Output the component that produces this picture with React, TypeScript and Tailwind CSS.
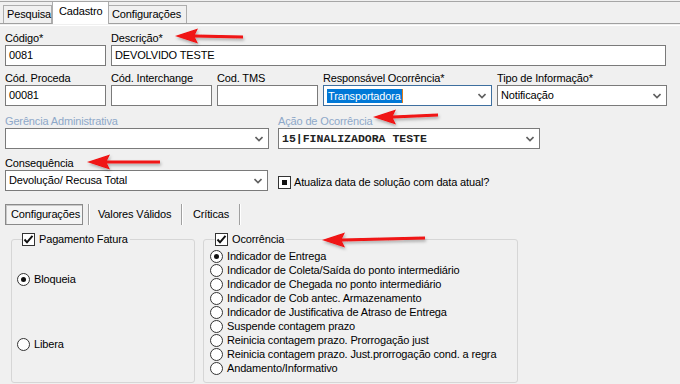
import React from "react";

const Chevron = () => (
  <svg width="8" height="6" viewBox="0 0 8 6" className="shrink-0">
    <path d="M0.5 1 L4 4.5 L7.5 1" stroke="#5f5f5f" strokeWidth="1.6" fill="none" />
  </svg>
);

const Label = ({ children, disabled }: { children: React.ReactNode; disabled?: boolean }) => (
  <div className={`h-[13px] leading-[13px] whitespace-nowrap ${disabled ? "text-[#8ea8c9]" : "text-black"}`}>{children}</div>
);

const Input = ({ value }: { value?: string }) => (
  <div className="h-[21px] border border-[#7a7a7a] bg-white px-[3px] flex items-center leading-[13px] whitespace-nowrap">{value}</div>
);

const Combo = ({ children, focused }: { children?: React.ReactNode; focused?: boolean }) => (
  <div
    className={`h-[21px] border ${focused ? "border-[#3e6f9f]" : "border-[#7a7a7a]"} bg-white pl-[3px] pr-[5px] flex items-center justify-between leading-[13px] whitespace-nowrap`}
  >
    <div className="flex items-center">{children}</div>
    <Chevron />
  </div>
);

const CheckBox = ({ mode }: { mode: "check" | "square" }) => (
  <div className="w-[13px] h-[13px] border border-[#333] bg-white flex items-center justify-center shrink-0">
    {mode === "check" ? (
      <svg width="11" height="11" viewBox="0 0 11 11">
        <path d="M1.5 5.5 L4 8.3 L9.5 1.8" stroke="#111" strokeWidth="2" fill="none" />
      </svg>
    ) : (
      <div className="w-[5px] h-[5px] bg-[#111]" />
    )}
  </div>
);

const Radio = ({ checked, label }: { checked?: boolean; label: string }) => (
  <div className="h-[14px] flex items-center gap-[4px] whitespace-nowrap">
    <div className="w-[13px] h-[13px] rounded-full border border-[#333] bg-white flex items-center justify-center shrink-0">
      {checked && <div className="w-[5px] h-[5px] rounded-full bg-[#111]" />}
    </div>
    <span className="leading-[13px]">{label}</span>
  </div>
);

const Arrow = ({ tx, ty, tail, tailY }: { tx: number; ty: number; tail: number; tailY: number }) => {
  const hb = tx + 23;
  const pts = [
    [tx, ty],
    [hb, ty - 7.5],
    [hb - 3, ty - 1.6],
    [tail, tailY - 1.4],
    [tail, tailY + 1.4],
    [hb - 3, ty + 1.6],
    [hb, ty + 7.5],
  ]
    .map((p) => p.join(","))
    .join(" ");
  return <polygon points={pts} fill="#f01212" filter="url(#sh)" />;
};

export default function App() {
  return (
    <div className="w-[680px] h-[384px] bg-[#f0f0f0] relative overflow-hidden font-['Liberation_Sans',Arial,sans-serif] text-[11px] text-black tracking-[-0.15px]">
      {/* top tab strip */}
      <div className="pt-[1px]">
        <div className="border-t border-[#a6a6a6]">
          <div className="flex items-end pl-[3px] h-[22px] border-b border-[#a0a0a0]">
            <div className="w-[49px] h-[18px] border border-b-0 border-[#adadad] bg-[#f0f0f0] flex items-center pl-[3px]">Pesquisa</div>
            <div className="w-[57px] h-[22px] -mb-[1px] border-x border-[#adadad] bg-white flex items-center pl-[6px] pb-[3px] relative z-10">Cadastro</div>
            <div className="w-[78px] h-[18px] border border-b-0 border-l-0 border-[#adadad] bg-[#f0f0f0] flex items-center pl-[3px]">Configurações</div>
          </div>
        </div>
      </div>
      <div className="h-[1px] bg-white mt-[1px]" />

      {/* form */}
      <div className="px-[5px] pt-[6px]">
        {/* row 1 */}
        <div className="flex gap-[5px]">
          <div className="w-[101px]">
            <Label>Código*</Label>
            <Input value="0081" />
          </div>
          <div className="w-[555px]">
            <Label>Descrição*</Label>
            <Input value="DEVOLVIDO TESTE" />
          </div>
        </div>
        {/* row 2 */}
        <div className="flex gap-[5px] mt-[6px]">
          <div className="w-[101px]">
            <Label>Cód. Proceda</Label>
            <Input value="00081" />
          </div>
          <div className="w-[101px]">
            <Label>Cód. Interchange</Label>
            <Input />
          </div>
          <div className="w-[101px]">
            <Label>Cod. TMS</Label>
            <Input />
          </div>
          <div className="w-[169px]">
            <Label>Responsável Ocorrência*</Label>
            <Combo focused>
              <span className="bg-[#0078d7] text-white px-[1px] leading-[14px]">Transportadora</span>
              <span className="w-[1px] h-[14px] bg-[#e07b1a]" />
            </Combo>
          </div>
          <div className="w-[170px]">
            <Label>Tipo de Informação*</Label>
            <Combo>Notificação</Combo>
          </div>
        </div>
        {/* row 3 */}
        <div className="flex gap-[9px] mt-[9px]">
          <div className="w-[264px]">
            <Label disabled>Gerência Administrativa</Label>
            <Combo />
          </div>
          <div className="w-[262px]">
            <Label disabled>Ação de Ocorrência</Label>
            <Combo>
              <span className="font-['Liberation_Mono',monospace] font-bold text-[11.5px] tracking-[0px] text-[#222]">15|FINALIZADORA TESTE</span>
            </Combo>
          </div>
        </div>
        {/* row 4 */}
        <div className="mt-[8px]">
          <Label>Consequência</Label>
          <div className="flex items-center">
            <div className="w-[263px]">
              <Combo>Devolução/ Recusa Total</Combo>
            </div>
            <div className="ml-[10px] flex items-center gap-[3px] mt-[4px]">
              <CheckBox mode="square" />
              <span className="whitespace-nowrap">Atualiza data de solução com data atual?</span>
            </div>
          </div>
        </div>

        {/* sub tabs */}
        <div className="flex items-stretch h-[21px] mt-[13px]">
          <div className="w-[78px] border border-[#8a8a8a] bg-[#f4f4f4] shadow-[inset_1px_1px_0_#c8c8c8] flex items-center pl-[5px]">Configurações</div>
          <div className="ml-[5px] w-[2px] border-l border-[#a0a0a0] bg-white" />
          <div className="w-[91px] flex items-center pl-[8px]">Valores Válidos</div>
          <div className="w-[2px] border-l border-[#a0a0a0] bg-white" />
          <div className="w-[56px] flex items-center pl-[10px]">Críticas</div>
          <div className="w-[2px] border-l border-[#a0a0a0] bg-white" />
        </div>

        {/* group boxes */}
        <div className="flex mt-[8px] pl-[6px] gap-[8px]">
          <fieldset className="w-[184px] h-[150px] border border-[#d6d6d6] rounded-[3px] pl-[5px]">
            <legend className="ml-[5px] pr-[2px] flex items-center gap-[4px] h-[13px]">
              <CheckBox mode="check" />
              <span className="leading-[13px]">Pagamento Fatura</span>
            </legend>
            <div className="mt-[26px]">
              <Radio checked label="Bloqueia" />
            </div>
            <div className="mt-[51px]">
              <Radio label="Libera" />
            </div>
          </fieldset>
          <fieldset className="w-[315px] h-[150px] border border-[#d6d6d6] rounded-[3px] pl-[6px]">
            <legend className="ml-[5px] pr-[2px] flex items-center gap-[4px] h-[13px]">
              <CheckBox mode="check" />
              <span className="leading-[13px]">Ocorrência</span>
            </legend>
            <div className="mt-[3px] flex flex-col">
              <Radio checked label="Indicador de Entrega" />
              <Radio label="Indicador de Coleta/Saída do ponto intermediário" />
              <Radio label="Indicador de Chegada no ponto intermediário" />
              <Radio label="Indicador de Cob antec. Armazenamento" />
              <Radio label="Indicador de Justificativa de Atraso de Entrega" />
              <Radio label="Suspende contagem prazo" />
              <Radio label="Reinicia contagem prazo. Prorrogação just" />
              <Radio label="Reinicia contagem prazo. Just.prorrogação cond. a regra" />
              <Radio label="Andamento/Informativo" />
            </div>
          </fieldset>
        </div>
      </div>

      {/* red annotation arrows */}
      <svg className="absolute inset-0 pointer-events-none" width="680" height="384">
        <defs>
          <filter id="sh" x="-20%" y="-50%" width="140%" height="200%">
            <feDropShadow dx="1" dy="2" stdDeviation="1.5" floodColor="#000" floodOpacity="0.3" />
          </filter>
        </defs>
        <Arrow tx={175} ty={36} tail={243} tailY={37} />
        <Arrow tx={373} ty={117} tail={438} tailY={115} />
        <Arrow tx={87} ty={162} tail={160} tailY={162} />
        <Arrow tx={322} ty={240} tail={425} tailY={238} />
      </svg>
    </div>
  );
}
